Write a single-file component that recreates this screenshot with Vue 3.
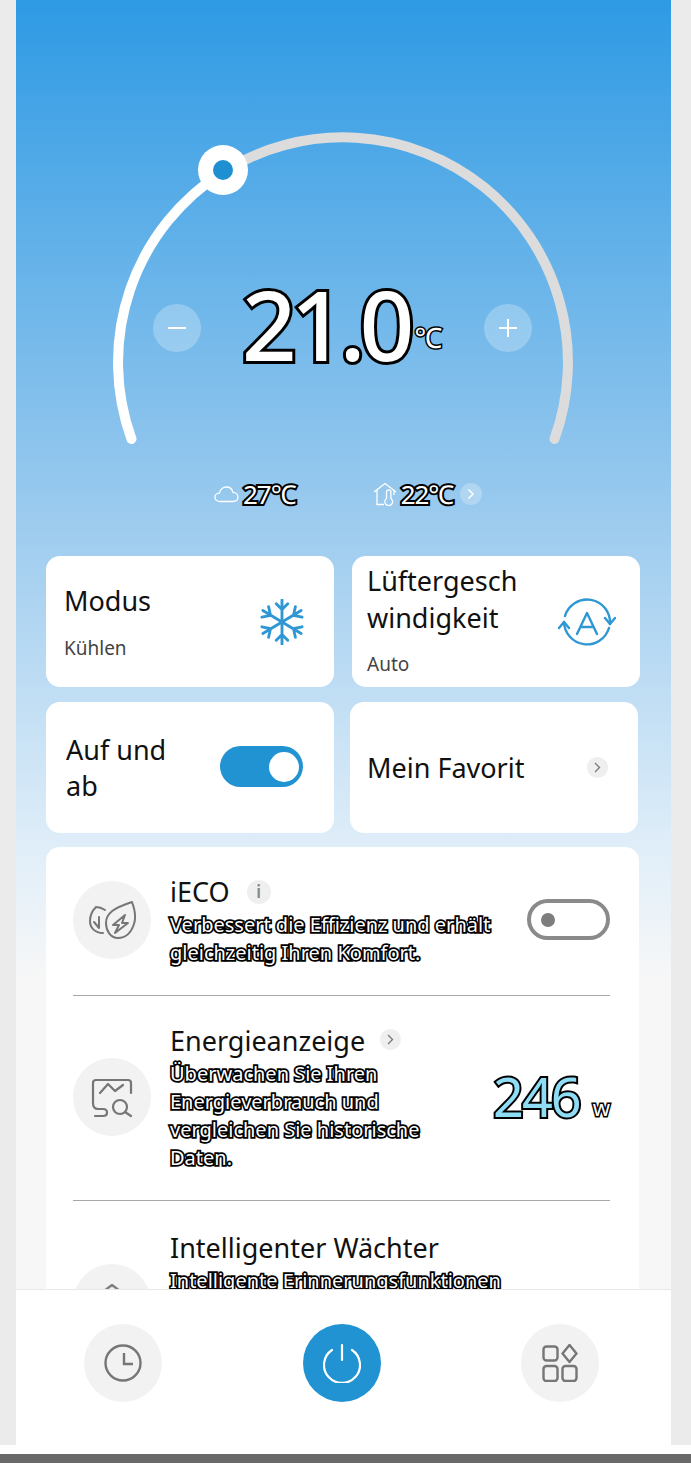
<script setup>
  const rows = [
    { title: 'iECO', desc: 'Verbessert die Effizienz und erhält gleichzeitig Ihren Komfort.', icon: 'eco', badge: 'info', kind: 'toggle' },
    { title: 'Energieanzeige', desc: 'Überwachen Sie Ihren Energieverbrauch und vergleichen Sie historische Daten.', icon: 'energy', badge: 'more', kind: 'power' },
    { title: 'Intelligenter Wächter', desc: 'Intelligente Erinnerungsfunktionen', icon: 'guard', badge: null, kind: null },
  ];
</script>

<template>
  <div class="page">
    <div class="screen">
      <div class="content">
        <div class="gauge">
          <svg class="dial" width="655" height="470" viewBox="16 0 655 470">
            <path d="M131.500 439 A225 225 0 0 1 223 172" fill="none" stroke="#fff" stroke-width="10" stroke-linecap="round" />
            <path d="M223 172 A225 225 0 0 1 554.500 439" fill="none" stroke="#dcdcdc" stroke-width="10" stroke-linecap="round" />
            <circle cx="223" cy="170" r="25" fill="#fff" />
            <circle cx="223" cy="170" r="10" fill="#1e90d2" />
          </svg>
          <div class="setpoint">
            <button class="round-btn">
              <svg width="20" height="20" viewBox="0 0 20 20"><path d="M1 10H19" stroke="#fff" stroke-width="2" /></svg>
            </button>
            <div class="temp">
              <span class="temp-value">21.0</span>
              <span class="temp-unit">℃</span>
            </div>
            <button class="round-btn">
              <svg width="20" height="20" viewBox="0 0 20 20"><path d="M1 10H19M10 1V19" stroke="#fff" stroke-width="2" /></svg>
            </button>
          </div>
        </div>

        <div class="climate">
          <div class="climate-item">
            <svg width="25" height="18" viewBox="0 0 25 18" fill="none" stroke="#fff" stroke-width="1.3">
              <path d="M6 16.500C3 16.500 1 14.700 1 12.200 1 9.800 3 8.200 5.400 8.200 6 4.600 9 2 12.400 2 15.800 2 18.300 4.300 18.900 7.400 21.700 7.500 24 9.400 24 12 24 14.600 22 16.500 19 16.500Z" />
            </svg>
            <span class="climate-text">27℃</span>
          </div>
          <div class="climate-item indoor">
            <svg width="24" height="24" viewBox="0 0 24 24" fill="none" stroke="#fff" stroke-width="1.3">
              <path d="M1 10 12 1.500 23 10" />
              <path d="M4 8V22.500H11" />
              <path d="M21 8V13" />
              <path d="M13.500 10a2.200 2.200 0 0 1 4.400 0V16.500a3.900 3.900 0 1 1-4.400 0Z" />
            </svg>
            <span class="climate-text">22℃</span>
            <span class="climate-more">
              <svg width="8" height="12" viewBox="0 0 8 12" fill="none" stroke="#fff" stroke-width="1.5"><path d="M1.500 1.500 6 6 1.500 10.500" /></svg>
            </span>
          </div>
        </div>

        <div class="cards">
          <div class="card-row">
            <div class="card">
              <div class="card-text">
                <div class="card-title">Modus</div>
                <div class="card-sub">Kühlen</div>
              </div>
              <svg class="card-icon" width="44" height="46" viewBox="0 0 46 48" fill="none" stroke="#2f97d3" stroke-width="3" stroke-linecap="round">
                <path d="M23 1V47M17 5 23 11 29 5M17 43 23 37 29 43" />
                <path d="M3 12 43 36M2 19 11 17 9 8M44 29 35 31 37 40" />
                <path d="M3 36 43 12M9 40 11 31 2 29M37 8 35 17 44 19" />
              </svg>
            </div>
            <div class="card fan">
              <div class="card-text">
                <div class="card-title">Lüftergesch<br>windigkeit</div>
                <div class="card-sub fan-sub">Auto</div>
              </div>
              <svg class="fan-icon" width="58" height="50" viewBox="0 0 58 50" fill="none" stroke="#2f97d3" stroke-width="2.400" stroke-linecap="round" stroke-linejoin="round">
                <path d="M7 19A23 23 0 0 1 52 27" />
                <path d="M51 31A23 23 0 0 1 6 25" />
                <path d="M47 21 52 27 57 21M1 31 6 25 11 31" />
                <path d="M19 37 29 16 39 37M23 30H35" />
              </svg>
            </div>
          </div>
          <div class="card-row second">
            <div class="card">
              <div class="card-title updown">Auf und<br>ab</div>
              <div class="switch-on"><span></span></div>
            </div>
            <div class="card favorite">
              <div class="card-title">Mein Favorit</div>
              <span class="chevron-badge">
                <svg width="7" height="11" viewBox="0 0 7 11" fill="none" stroke="#777" stroke-width="1.3"><path d="M1 1 5.500 5.500 1 10" /></svg>
              </span>
            </div>
          </div>
        </div>

        <div class="panel">
          <div v-for="row in rows" :key="row.title" class="feature" :class="row.icon">
            <div class="feature-icon">
              <svg v-if="row.icon === 'eco'" width="50" height="40" viewBox="0 0 50 40" fill="none" stroke="#767676" stroke-width="2" stroke-linejoin="round" stroke-linecap="round">
                <path d="M18 10C15 8 12 7 9 7 5 11 3 16 3 21 3 28 8 33 16 33" />
                <path d="M12 17V28M7 22 12 28" />
                <path d="M45 2C48 10 49 18 47 24 44 33 38 38 31 38 23 38 19 30 19 23 19 13 27 8 45 2Z" />
                <path d="M38 15 26 25H32L28 33 41 23H35Z" />
              </svg>
              <svg v-else-if="row.icon === 'energy'" width="46" height="46" viewBox="0 0 46 46" fill="none" stroke="#767676" stroke-width="2.200" stroke-linecap="round" stroke-linejoin="round">
                <path d="M42 19V9Q42 6 39 6H7Q4 6 4 9V29Q4 35 9 35H14Q18 35 18 38.500 18 42 14 42H6" />
                <path d="M11 19 19 10 26 17 34 11" />
                <circle cx="31" cy="33" r="7" />
                <path d="M36 38 42 42" />
              </svg>
              <svg v-else class="guard-icon" width="40" height="40" viewBox="0 0 40 40" fill="none" stroke="#808080" stroke-width="2.400" stroke-linecap="round" stroke-linejoin="round">
                <path d="M8 11 20 2 32 11" />
              </svg>
            </div>
            <div class="feature-text">
              <div class="feature-title">
                <span>{{ row.title }}</span>
                <span v-if="row.badge === 'info'" class="info-badge">i</span>
                <span v-if="row.badge === 'more'" class="chevron-badge title-chevron">
                  <svg width="7" height="11" viewBox="0 0 7 11" fill="none" stroke="#777" stroke-width="1.3"><path d="M1 1 5.500 5.500 1 10" /></svg>
                </span>
              </div>
              <div class="feature-desc">{{ row.desc }}</div>
            </div>
            <div v-if="row.kind === 'toggle'" class="switch-off"><span></span></div>
            <div v-if="row.kind === 'power'" class="power-value">
              <span class="power-num">246</span>
              <span class="power-unit">w</span>
            </div>
          </div>
        </div>
      </div>

      <div class="bottom-bar">
        <button class="bar-btn">
          <svg width="38" height="38" viewBox="0 0 38 38" fill="none" stroke="#767676" stroke-width="2.400">
            <circle cx="19" cy="19" r="17.500" />
            <path d="M20 9V20H29" />
          </svg>
        </button>
        <button class="bar-btn power">
          <svg width="38" height="40" viewBox="0 0 38 40" fill="none" stroke="#fff" stroke-width="2.200" stroke-linecap="round">
            <path d="M19 2V17" />
            <path d="M9 7A18 18 0 1 0 29 7" />
          </svg>
        </button>
        <button class="bar-btn">
          <svg width="36" height="38" viewBox="0 0 36 38" fill="none" stroke="#767676" stroke-width="2.400" stroke-linejoin="round">
            <rect x="1.500" y="2.500" width="14" height="14" rx="3" />
            <rect x="1.500" y="22" width="14" height="15" rx="3" />
            <rect x="20.500" y="22" width="14" height="15" rx="3" />
            <path d="M27.500 1 34.500 9.500 27.500 18 20.500 9.500Z" />
          </svg>
        </button>
      </div>
    </div>
    <div class="system-line"></div>
  </div>
</template>

<style>
  body {
    background: #fff;
  }
</style>

<style scoped>
  .page {
    width: 691px;
    height: 1477px;
    overflow: hidden;
    font-family: "Noto Sans", "Open Sans", sans-serif;
    color: #111;
  }

  .screen {
    display: flex;
    flex-direction: column;
    width: 655px;
    height: 1445px;
    padding: 0 20px 0 16px;
    background: #ebebeb;
  }

  .content {
    flex: 1;
    min-height: 0;
    overflow: hidden;
    background: linear-gradient(180deg, #2e9ae4 0, #98c9ee 500px, #e2eff9 860px, #f7f7f7 980px);
  }

  .gauge {
    position: relative;
    height: 470px;
  }

  .dial {
    display: block;
  }

  .setpoint {
    position: absolute;
    top: 273px;
    left: 137px;
    display: flex;
    justify-content: space-between;
    align-items: center;
    width: 379px;
    height: 110px;
  }

  .round-btn {
    display: flex;
    align-items: center;
    justify-content: center;
    width: 48px;
    height: 48px;
    padding: 0;
    border: 0;
    border-radius: 50%;
    background: rgba(255, 255, 255, 0.25);
  }

  .temp {
    display: flex;
    align-items: center;
    margin: -8px 2px 0 0;
  }

  .temp-value {
    font-size: 96px;
    font-weight: 500;
    line-height: 110px;
    letter-spacing: -6px;
    color: #fff;
    -webkit-text-stroke: 6px #000;
    paint-order: stroke fill;
  }

  .temp-unit {
    margin: 26px 0 0 6px;
    font-size: 28px;
    line-height: 30px;
    letter-spacing: -1px;
    color: #fff;
    -webkit-text-stroke: 3px #000;
    paint-order: stroke fill;
  }

  .climate {
    display: flex;
    height: 86px;
    padding: 0 0 0 198px;
    gap: 77px;
  }

  .climate-item {
    display: flex;
    align-items: center;
    height: 48px;
    gap: 4px;
  }

  .climate-text {
    font-size: 26px;
    letter-spacing: -1px;
    color: #fff;
    -webkit-text-stroke: 4px #000;
    paint-order: stroke fill;
  }

  .climate-more {
    display: flex;
    align-items: center;
    justify-content: center;
    width: 22px;
    height: 22px;
    margin-left: 3px;
    border-radius: 50%;
    background: rgba(255, 255, 255, 0.25);
  }

  .cards {
    display: flex;
    flex-direction: column;
    gap: 15px;
    padding: 0 31px 0 30px;
  }

  .card-row {
    display: flex;
    gap: 18px;
  }

  .card-row.second {
    gap: 16px;
  }

  .card {
    display: flex;
    align-items: center;
    justify-content: space-between;
    box-sizing: border-box;
    width: 288px;
    height: 131px;
    padding: 0 18px;
    border-radius: 14px;
    background: #fff;
  }

  .card.fan {
    padding: 0 24px 5px 15px;
  }

  .card-title {
    font-size: 27px;
    line-height: 37px;
    color: #111;
  }

  .card-sub {
    margin-top: 16px;
    font-size: 19px;
    line-height: 26px;
    color: #444;
  }

  .fan-sub {
    margin-top: 15px;
  }

  .card-icon {
    margin-right: 12px;
  }

  .fan-icon {
    margin-top: 5px;
  }

  .updown {
    margin-left: 2px;
    line-height: 36px;
  }

  .switch-on {
    display: flex;
    align-items: center;
    justify-content: flex-end;
    box-sizing: border-box;
    width: 83px;
    height: 41px;
    margin: 0 13px 2px 0;
    padding-right: 4px;
    border-radius: 21px;
    background: #2193d3;
  }

  .switch-on span {
    width: 30px;
    height: 30px;
    border-radius: 50%;
    background: #fff;
  }

  .favorite {
    padding: 0 30px 0 17px;
  }

  .chevron-badge {
    display: inline-flex;
    align-items: center;
    justify-content: center;
    width: 21px;
    height: 21px;
    border-radius: 50%;
    background: #efefef;
  }

  .title-chevron {
    margin: -4px 0 0 -2px;
  }

  .panel {
    box-sizing: border-box;
    width: 593px;
    margin: 14px 0 0 30px;
    padding: 0 29px 0 27px;
    border-radius: 14px;
    background: #fff;
  }

  .feature {
    display: flex;
    align-items: center;
    box-sizing: border-box;
    border-bottom: 1px solid #a8a8a8;
  }

  .feature.eco {
    height: 149px;
    padding-bottom: 3px;
  }

  .feature.eco .feature-text {
    margin-top: 3px;
  }

  .feature.energy {
    height: 205px;
    padding-bottom: 2px;
  }

  .feature.energy .feature-text {
    margin-top: 2px;
  }

  .feature.guard {
    align-items: flex-start;
    height: 200px;
    padding-top: 30px;
    border-bottom: 0;
  }

  .feature-icon {
    display: flex;
    align-items: center;
    justify-content: center;
    flex: none;
    width: 78px;
    height: 78px;
    margin-right: 19px;
    border-radius: 50%;
    background: #f2f2f2;
  }

  .feature.guard .feature-icon {
    margin-top: 33px;
  }

  .feature-text {
    flex: 1;
    min-width: 0;
  }

  .feature-title {
    display: flex;
    align-items: center;
    gap: 17px;
    font-size: 27px;
    line-height: 34px;
    color: #111;
  }

  .feature-desc {
    max-width: 340px;
    margin-top: 2px;
    font-size: 20px;
    line-height: 28px;
    color: #fff;
    -webkit-text-stroke: 3.500px #000;
    paint-order: stroke fill;
  }

  .energy .feature-desc {
    max-width: 270px;
  }

  .info-badge {
    display: inline-flex;
    align-items: center;
    justify-content: center;
    width: 24px;
    height: 24px;
    border-radius: 50%;
    background: #efefef;
    font-size: 17px;
    font-weight: 600;
    color: #888;
  }

  .switch-off {
    display: flex;
    align-items: center;
    flex: none;
    box-sizing: border-box;
    width: 83px;
    height: 41px;
    padding-left: 10px;
    border: 4px solid #8a8a8a;
    border-radius: 21px;
  }

  .switch-off span {
    width: 14px;
    height: 14px;
    border-radius: 50%;
    background: #7d7d7d;
  }

  .power-value {
    display: flex;
    align-items: center;
    justify-content: space-between;
    flex: none;
    width: 117px;
    margin-top: -2px;
  }

  .power-num {
    font-size: 54px;
    line-height: 60px;
    letter-spacing: -2px;
    color: #8fdcf5;
    -webkit-text-stroke: 4px #000;
    paint-order: stroke fill;
  }

  .power-unit {
    margin-top: 22px;
    font-size: 22px;
    line-height: 30px;
    color: #fff;
    -webkit-text-stroke: 3px #000;
    paint-order: stroke fill;
  }

  .bottom-bar {
    display: flex;
    align-items: center;
    justify-content: space-between;
    box-sizing: border-box;
    height: 156px;
    padding: 0 72px 10px 68px;
    border-top: 1px solid #e8e8e8;
    background: #fff;
  }

  .bar-btn {
    display: flex;
    align-items: center;
    justify-content: center;
    width: 78px;
    height: 78px;
    padding: 0;
    border: 0;
    border-radius: 50%;
    background: #f2f2f2;
  }

  .bar-btn.power {
    background: #2193d3;
  }

  .system-line {
    height: 9px;
    margin-top: 9px;
    background: #696969;
  }
</style>
